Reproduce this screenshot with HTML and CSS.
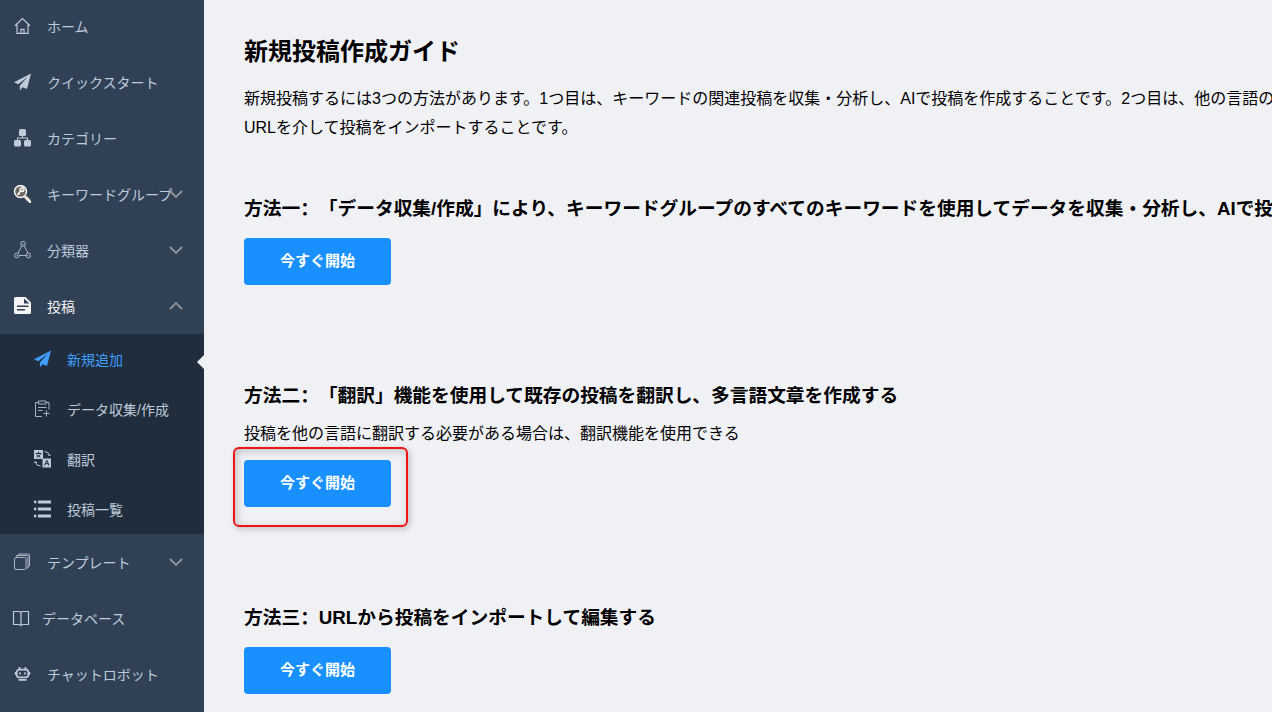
FILE: index.html
```html
<!DOCTYPE html>
<html lang="ja">
<head>
<meta charset="utf-8">
<title>新規投稿作成ガイド</title>
<link rel="stylesheet" href="styles.css">
</head>
<body>
<div class="layout">
  <nav class="sidebar">
    <a class="item" href="#">
      <svg class="icon line" viewBox="0 0 18 18"><path d="M2 8.7 9.5 1.6 17 8.7M4 7.5V16.3H15V7.5M8 16V12.3H11V16"/></svg>
      <span>ホーム</span>
    </a>
    <a class="item" href="#">
      <svg class="icon" viewBox="0 0 18 18"><path d="M18 .5 1 9.3 5.2 11.3 14.6 4 6.9 12.4V17.6L9.4 14.2 14 16Z"/></svg>
      <span>クイックスタート</span>
    </a>
    <a class="item" href="#">
      <svg class="icon" viewBox="0 0 18 18"><rect x="6" y="0" width="7" height="7" rx="1.5"/><rect x="1" y="11" width="7" height="6.5" rx="1.5"/><rect x="11" y="11" width="7" height="6.5" rx="1.5"/><path d="M9 6h1v2.5h5V11h-1V9.500H5V11H4V8.500H9Z"/></svg>
      <span>カテゴリー</span>
    </a>
    <button class="item" type="button">
      <svg class="icon" viewBox="0 0 18 18"><path d="m13 12.500 5 5" stroke="#8b8174" stroke-width="4" stroke-linecap="round"/><path d="m12.500 12 5.200 5.300" stroke="#fff" stroke-width="2" stroke-linecap="round"/><circle cx="7.500" cy="6.500" r="6" fill="#6d675f" stroke="#fff" stroke-width="1.400"/><circle cx="9" cy="4.600" r="2" fill="#aaa" stroke="#fff" stroke-width="1.200"/><path d="M7.700 6 4.400 9.700M5.500 8.500l1 1" stroke="#fff" stroke-width="1.400"/></svg>
      <span>キーワードグループ</span>
      <svg class="chevron" viewBox="0 0 14 8"><path d="m1 1 6 6 6-6"/></svg>
    </button>
    <button class="item" type="button">
      <svg class="icon line thin" viewBox="0 0 18 18"><circle cx="10" cy="2.800" r="2.400"/><circle cx="3.800" cy="14.500" r="2.400"/><circle cx="15.500" cy="14.500" r="2.400"/><path d="M8.700 5 5 12.200M11.300 5 15 12.200M6.400 14.500H13.400M9 2.500l1 1 1-1M2.800 14.200l1 1 1-1M14.500 14.200l1 1 1-1"/></svg>
      <span>分類器</span>
      <svg class="chevron" viewBox="0 0 14 8"><path d="m1 1 6 6 6-6"/></svg>
    </button>
    <button class="item open" type="button">
      <svg class="icon" viewBox="0 0 18 18"><path fill-rule="evenodd" d="M2.500 0H12.500L18 5.500V15.500Q18 17 16.500 17H2.500Q1 17 1 15.500V1.500Q1 0 2.500 0ZM11 1.500V6.500H16.500ZM4 8.500V10H15.500V8.500ZM4 12V13.500H12V12Z"/></svg>
      <span>投稿</span>
      <svg class="chevron" viewBox="0 0 14 8"><path d="m1 7 6-6 6 6"/></svg>
    </button>
    <div class="submenu">
      <a class="item active" href="#">
        <svg class="icon" viewBox="0 0 18 18"><path d="M18 .5 1 9.300 5.200 11.300 14.600 4 6.900 12.400V17.600L9.400 14.200 14 16Z"/></svg>
        <span>新規追加</span>
      </a>
      <a class="item" href="#">
        <svg class="icon line thin" viewBox="0 0 18 18"><path d="M5.500 2.500H2.500V16.500H9M13 2.500H16V9.500M5.500 1H13V4H5.500ZM5 7.500H13.500M5 10.500H9.500M13.500 10.500V16.500M10.500 13.500H16.500"/></svg>
        <span>データ収集/作成</span>
      </a>
      <a class="item" href="#">
        <svg class="icon" viewBox="0 0 18 18"><path d="M1 0h9v9H1ZM9.500 8.500H18V17.500H9.500Z"/><path class="cut" d="M5.500 1.500V3M2.500 3.500H8.500M3.500 5l4 2.500M7.500 4.500 3.500 7.500M11.500 15.500 13.800 10.200 16 15.500M12.300 13.700H15.400"/><path class="arc" d="M11.500 1.500Q15.500 1.500 16.500 5.500M15 4.500l1.500 1.500 1.500-1.500M7.500 16Q3 16 2.500 12M1 13l1.500-1.500L4 13"/></svg>
        <span>翻訳</span>
      </a>
      <a class="item" href="#">
        <svg class="icon" viewBox="0 0 18 18"><path d="M5 .5H18V3.500H5ZM5 7.500H18V10.500H5ZM5 14.500H18V17.500H5Z"/><circle cx="2.200" cy="2" r="1.400"/><circle cx="2.200" cy="9" r="1.400"/><circle cx="2.200" cy="16" r="1.400"/></svg>
        <span>投稿一覧</span>
      </a>
    </div>
    <button class="item" type="button">
      <svg class="icon line thin" viewBox="0 0 18 18"><rect x="1.500" y="4.500" width="11.500" height="12" rx="1.500"/><path d="M3.500 4V2.500H14Q15 2.500 15 3.500V15H13.500M5.500 2.500V1H15.500Q16.500 1 16.500 2V13H15"/></svg>
      <span>テンプレート</span>
      <svg class="chevron" viewBox="0 0 14 8"><path d="m1 1 6 6 6-6"/></svg>
    </button>
    <a class="item compact" href="#">
      <svg class="icon line" viewBox="0 0 18 18"><path d="M1.500 2.500H6.500Q8.500 2.500 9 3.500 9.500 2.500 11.500 2.500H16.500V15.500H11.500Q9.500 15.500 9 16.500 8.500 15.500 6.500 15.500H1.500ZM9 3.500V16"/></svg>
      <span>データベース</span>
    </a>
    <a class="item" href="#">
      <svg class="icon bot" viewBox="0 0 18 18"><rect x="3.700" y="4.700" width="11.600" height="7.600" rx="2.500"/><path d="M6.500 2V4M12.500 2V4M2.700 7V10M16.300 7V10M7 7.500V9.500M12 7.500V9.500M5.500 14.800H13.500"/></svg>
      <span>チャットロボット</span>
    </a>
  </nav>

  <main class="content">
    <h1 class="title">新規投稿作成ガイド</h1>
    <p class="text">新規投稿するには3つの方法があります。1つ目は、キーワードの関連投稿を収集<span class="dot">&#12539;</span>分析し、AIで投稿を作成することです。2つ目は、他の言語の<br>URLを介して投稿をインポートすることです。</p>

    <section class="method">
      <h3 class="method-title">方法一<span lang="zh-CN">：</span>「データ収集/作成」により、キーワードグループのすべてのキーワードを使用してデータを収集<span class="dot">&#12539;</span>分析し、AIで投稿</h3>
      <button class="start" type="button">今すぐ開始</button>
    </section>

    <section class="method">
      <h3 class="method-title">方法二<span lang="zh-CN">：</span>「翻訳」機能を使用して既存の投稿を翻訳し、多言語文章を作成する</h3>
      <p class="text note">投稿を他の言語に翻訳する必要がある場合は、翻訳機能を使用できる</p>
      <div class="highlight"><button class="start" type="button">今すぐ開始</button></div>
    </section>

    <section class="method">
      <h3 class="method-title">方法三<span lang="zh-CN">：</span>URLから投稿をインポートして編集する</h3>
      <button class="start" type="button">今すぐ開始</button>
    </section>
  </main>
</div>
</body>
</html>
```
FILE: styles.css
```css
* { box-sizing: border-box; }

body {
  margin: 0;
  background: #f0f1f5;
  color: #000;
  font-family: "Liberation Sans", "Noto Sans CJK SC", sans-serif;
  text-spacing-trim: space-all;
}

button { font-family: inherit; border: 0; cursor: pointer; }

.layout {
  display: flex;
  height: 100vh;
  overflow: hidden;
}

/* Sidebar */
.sidebar {
  flex: 0 0 204px;
  min-width: 0;
  margin-top: -2px;
  background: #304156;
}

.item {
  display: flex;
  align-items: center;
  gap: 16px;
  width: 100%;
  height: 56px;
  padding: 0 21px 0 13px;
  background: none;
  color: #bfcbd9;
  font-size: 14px;
  line-height: 20px;
  text-align: left;
  text-decoration: none;
  white-space: nowrap;
}

.item span { flex: 1; min-width: 0; padding-top: 2px; }
.item.open { color: #f4f4f5; }
.item.compact { gap: 12px; padding-left: 12px; }

.icon {
  flex: none;
  width: 18px;
  height: 18px;
  fill: currentColor;
}

.line, .bot { fill: none; stroke: currentColor; stroke-width: 1.2; }
.thin { stroke-width: 1; opacity: .85; }
.bot { stroke-width: 1.7; }
.cut { fill: none; stroke: #1f2d3d; }
.arc { fill: none; stroke: currentColor; }

.chevron {
  flex: none;
  width: 14px;
  height: 8px;
  margin-left: -16px;
  fill: none;
  stroke: #909399;
  stroke-width: 1.8;
}

.submenu { background: #1f2d3d; }

.submenu .item {
  position: relative;
  height: 50px;
  padding-left: 33px;
}

.submenu .active { color: #409eff; }

.active::after {
  content: "";
  position: absolute;
  top: 21px;
  right: 0;
  border: 7px solid transparent;
  border-left: 0;
  border-right-color: #f0f1f5;
}

/* Guide */
.content {
  flex: 1;
  min-width: 0;
  padding: 37px 0 18px 40px;
  overflow: hidden;
  white-space: nowrap;
}

.title {
  margin: 0 0 17px;
  font-size: 24px;
  line-height: 30px;
}

.text {
  margin: 0;
  font-size: 16px;
  line-height: 29px;
}

.dot { font-family: "Noto Sans CJK JP", sans-serif; line-height: 1; }

.method { margin-top: 97px; }
.text + .method { margin-top: 53px; }

.method-title {
  margin: 0 0 15px;
  line-height: 28px;
}

.method-title:has(+ .note) { margin-bottom: 9px; }
.note { margin-bottom: 12px; }

.start {
  display: block;
  height: 47px;
  padding: 0 36px 4px;
  border-radius: 4px;
  background: #1890ff;
  color: #fff;
  font-size: 15px;
  font-weight: bold;
}

.highlight {
  position: relative;
  width: fit-content;
}

.highlight::after {
  content: "";
  position: absolute;
  inset: -13px -17px -20px -11px;
  border: 2px solid #f01414;
  border-radius: 6px;
  box-shadow: 2px 2px 6px rgba(0, 0, 0, .2), inset 2px 2px 8px rgba(0, 0, 0, .2);
  pointer-events: none;
}
```
